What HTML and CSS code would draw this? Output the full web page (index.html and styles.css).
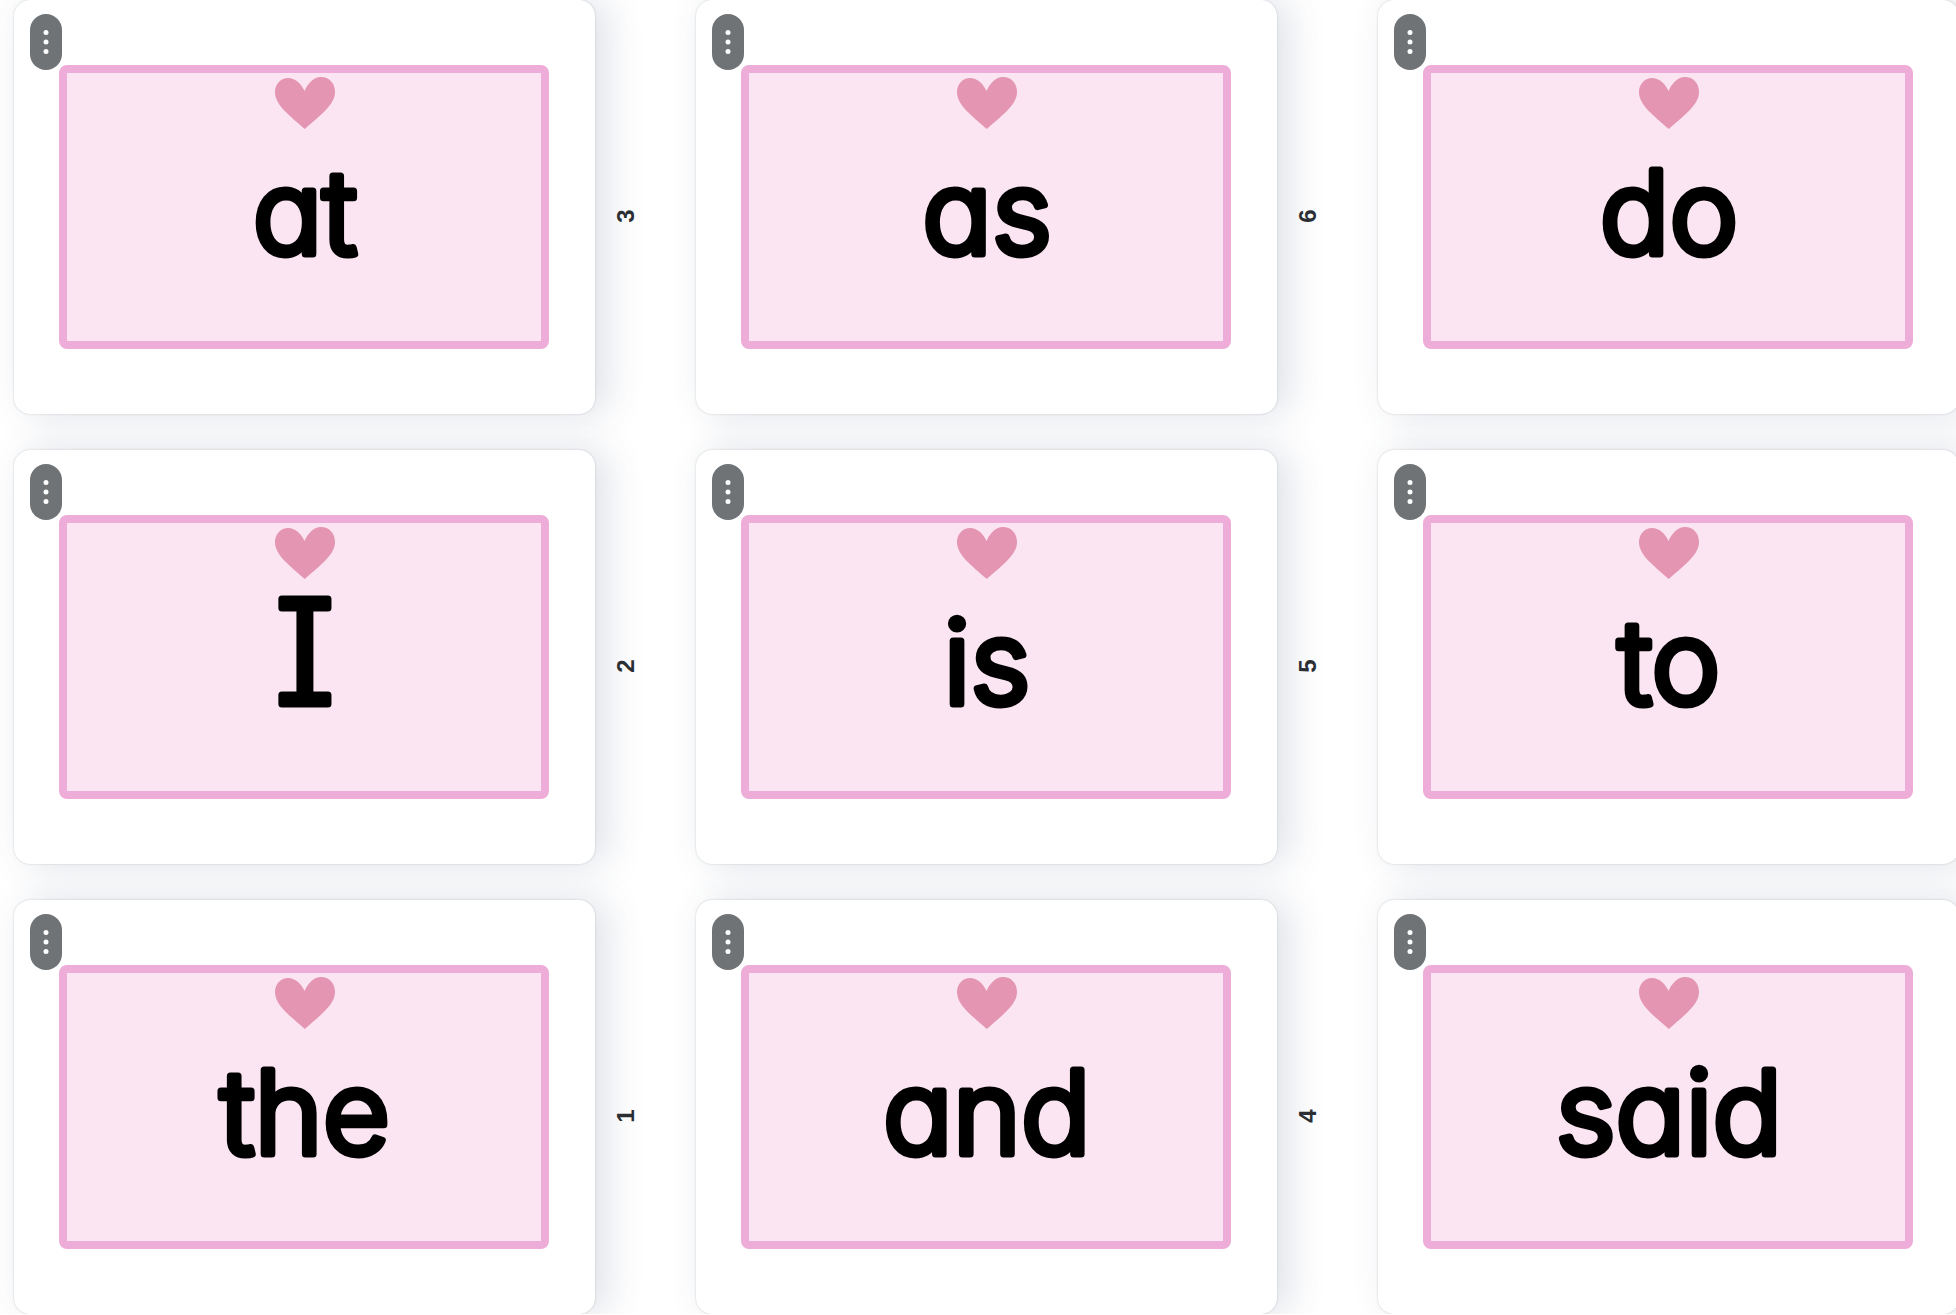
FILE: index.html
```html
<!DOCTYPE html>
<html lang="en">
<head>
  <meta charset="UTF-8" />
  <title>Heart Words</title>
  <link rel="stylesheet" href="styles.css">
</head>
<body>
  <svg class="sprite" aria-hidden="true">
    <symbol id="heart" viewBox="0 0 60 52">
      <path d="M29.5 14C32 8 38 0 46 0C54 0 60 6 60 15C60 27 48 36 29.8 52C14 38 0 28 0 15C0 7 6 1 13 1C21 1 27 8 29.5 14Z" />
    </symbol>
    <symbol id="dots" viewBox="0 0 6 24">
      <circle cx="3" cy="2.5" r="2.5" />
      <circle cx="3" cy="12" r="2.5" />
      <circle cx="3" cy="21.5" r="2.5" />
    </symbol>
  </svg>

  <main class="pages">
    <!-- top row -->
    <div class="page">
      <div class="card">
        <button class="menu" aria-label="Page options"><svg><use href="#dots" /></svg></button>
        <div class="frame">
          <svg class="heart"><use href="#heart" /></svg>
          <svg class="word"><text x="50%" y="125">at</text></svg>
        </div>
      </div>
      <span class="number">3</span>
    </div>
    <div class="page">
      <div class="card">
        <button class="menu" aria-label="Page options"><svg><use href="#dots" /></svg></button>
        <div class="frame">
          <svg class="heart"><use href="#heart" /></svg>
          <svg class="word"><text x="50%" y="125">as</text></svg>
        </div>
      </div>
      <span class="number">6</span>
    </div>
    <div class="page">
      <div class="card">
        <button class="menu" aria-label="Page options"><svg><use href="#dots" /></svg></button>
        <div class="frame">
          <svg class="heart"><use href="#heart" /></svg>
          <svg class="word"><text x="50%" y="125">do</text></svg>
        </div>
      </div>
    </div>

    <!-- middle row -->
    <div class="page">
      <div class="card">
        <button class="menu" aria-label="Page options"><svg><use href="#dots" /></svg></button>
        <div class="frame">
          <svg class="heart"><use href="#heart" /></svg>
          <svg class="word capital"><text x="50%" y="125">I</text></svg>
        </div>
      </div>
      <span class="number">2</span>
    </div>
    <div class="page">
      <div class="card">
        <button class="menu" aria-label="Page options"><svg><use href="#dots" /></svg></button>
        <div class="frame">
          <svg class="heart"><use href="#heart" /></svg>
          <svg class="word"><text x="50%" y="125">is</text></svg>
        </div>
      </div>
      <span class="number">5</span>
    </div>
    <div class="page">
      <div class="card">
        <button class="menu" aria-label="Page options"><svg><use href="#dots" /></svg></button>
        <div class="frame">
          <svg class="heart"><use href="#heart" /></svg>
          <svg class="word"><text x="50%" y="125">to</text></svg>
        </div>
      </div>
    </div>

    <!-- bottom row -->
    <div class="page">
      <div class="card">
        <button class="menu" aria-label="Page options"><svg><use href="#dots" /></svg></button>
        <div class="frame">
          <svg class="heart"><use href="#heart" /></svg>
          <svg class="word"><text x="50%" y="125">the</text></svg>
        </div>
      </div>
      <span class="number">1</span>
    </div>
    <div class="page">
      <div class="card">
        <button class="menu" aria-label="Page options"><svg><use href="#dots" /></svg></button>
        <div class="frame">
          <svg class="heart"><use href="#heart" /></svg>
          <svg class="word"><text x="50%" y="125">and</text></svg>
        </div>
      </div>
      <span class="number">4</span>
    </div>
    <div class="page">
      <div class="card">
        <button class="menu" aria-label="Page options"><svg><use href="#dots" /></svg></button>
        <div class="frame">
          <svg class="heart"><use href="#heart" /></svg>
          <svg class="word"><text x="50%" y="125">said</text></svg>
        </div>
      </div>
    </div>
  </main>
</body>
</html>
```
FILE: styles.css
```css
body { margin: 0; background: #fff; font-family: Inter, sans-serif; overflow: hidden; }
.sprite { display: none; }

/* last column runs off the right edge */
.pages {
  display: grid;
  grid-template-columns: repeat(3, 1fr);
  row-gap: 36px;
  width: calc(100% + 90px);
  padding-left: 14px;
}
.page {
  display: grid;
  grid-template-columns: 1fr 62px;
  align-items: center;
  padding-right: 39px;
}
.card {
  position: relative;
  padding: 65px 46px 65px 45px;
  background: #fff;
  border-radius: 16px;
  box-shadow: 0 0 2px rgba(40, 50, 60, 0.25), 12px 0 36px rgba(57, 76, 110, 0.17);
}
.menu {
  position: absolute;
  top: 14px;
  left: 16px;
  width: 32px;
  height: 56px;
  padding: 0;
  border: none;
  border-radius: 16px;
  background: #6f7376;
  display: flex;
  align-items: center;
  justify-content: center;
  cursor: pointer;
}
.menu svg { width: 6px; height: 24px; fill: #fff; }
.frame {
  box-sizing: border-box;
  aspect-ratio: 490 / 284;
  padding: 4px 0 0 2px;
  border: 8px solid #eeadd9;
  border-radius: 8px;
  background: #fbe5f2;
  display: flex;
  flex-direction: column;
  align-items: center;
}
.heart { width: 60px; height: 52px; fill: #e495b1; }

/* hand-writing shapes: round corners, one-storey a, capital I with bars */
.word {
  width: 100%;
  height: 136px;
  overflow: visible;
  font-size: 116px;
  font-weight: 300;
  font-feature-settings: "cv11", "cv08";
  text-anchor: middle;
  stroke: #000;
  stroke-width: 7px;
  stroke-linejoin: round;
}
.capital { font-size: 144px; }
.number {
  justify-self: center;
  margin-top: 18px;
  color: #2b2e33;
  font-family: "Liberation Sans", sans-serif;
  font-size: 24px;
  font-weight: 700;
  line-height: 24px;
  transform: rotate(-90deg);
}
```
